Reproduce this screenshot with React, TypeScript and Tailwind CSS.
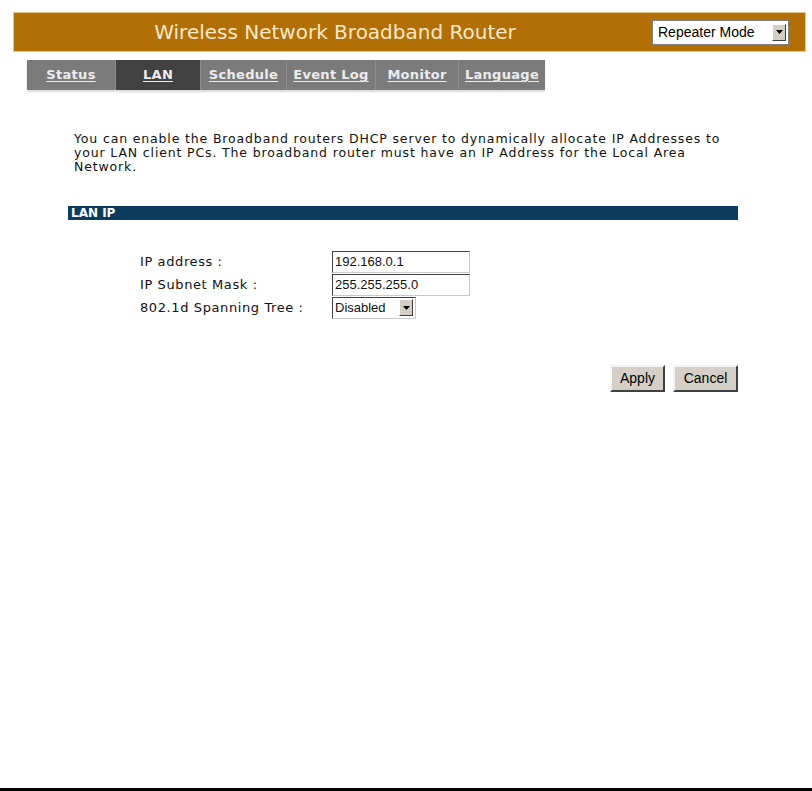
import React from "react";

const Arrow = () => (
  <span className="flex h-[17px] w-[14px] items-center justify-center border border-t-white border-l-white border-b-[#404040] border-r-[#404040] bg-[#d4d0c8]">
    <svg width="7" height="4" viewBox="0 0 7 4"><path d="M0 0h7L3.5 4z" fill="#000" /></svg>
  </span>
);

const tabs = [
  { label: "Status", w: 88, active: false },
  { label: "LAN", w: 85, active: true },
  { label: "Schedule", w: 86, active: false },
  { label: "Event Log", w: 89, active: false },
  { label: "Monitor", w: 83, active: false },
  { label: "Language", w: 87, active: false },
];

const arial = { fontFamily: '"Liberation Sans", Arial, sans-serif' };
const inputCls =
  "flex h-[22px] w-[138px] items-center border border-t-[#404040] border-l-[#404040] border-b-[#c8c8c8] border-r-[#c8c8c8] bg-white pl-[2px] text-[13px] tracking-normal";

export default function App() {
  return (
    <div className="relative flex h-[791px] w-[812px] flex-col overflow-hidden bg-white" style={{ fontFamily: '"DejaVu Sans", Verdana, sans-serif' }}>
      {/* header */}
      <div className="ml-[13px] mt-[12px] flex h-[40px] w-[793px] items-center border border-[#e8c888] bg-[#b26f05]">
        <div className="flex-1 pl-[4px] text-center text-[20px] text-[#f6e8c8]">Wireless Network Broadband Router</div>
        <div className="mr-[16px] flex h-[25px] w-[137px] items-center border border-[#808080] bg-white pl-[5px] pr-[2px]">
          <span className="flex-1 text-[14px] text-black" style={arial}>Repeater Mode</span>
          <Arrow />
        </div>
      </div>

      {/* tabs */}
      <div className="ml-[27px] mt-[8px] flex h-[30px] self-start shadow-[0_2px_2px_rgba(0,0,0,0.15)]">
        {tabs.map((t, i) => (
          <div
            key={t.label}
            className={`flex h-full items-center justify-center ${t.active ? "bg-[#424242]" : "bg-[#7b7b7b]"} ${i > 0 ? "border-l border-[#8e8e8e]" : ""}`}
            style={{ width: t.w }}
          >
            <span className="text-[13px] font-bold tracking-[0.3px] text-[#ececec] underline underline-offset-2">{t.label}</span>
          </div>
        ))}
      </div>

      {/* description */}
      <p className="ml-[74px] mt-[42px] whitespace-nowrap text-[12.5px] leading-[14px] tracking-[0.85px] text-[#111]">
        You can enable the Broadband routers DHCP server to dynamically allocate IP Addresses to
        <br />
        your LAN client PCs. The broadband router must have an IP Address for the Local Area
        <br />
        Network.
      </p>

      {/* section header */}
      <div className="ml-[68px] mt-[32px] flex h-[14px] w-[670px] items-center bg-[#0d3b5e] pl-[3px]">
        <span className="text-[12px] font-bold text-white">LAN IP</span>
      </div>

      {/* form */}
      <div className="ml-[140px] mt-[30px] flex flex-col text-[13px] tracking-[0.6px] text-[#111]">
        <div className="flex h-[23px] items-center">
          <span className="w-[192px]">IP address :</span>
          <div className={inputCls} style={arial}>192.168.0.1</div>
        </div>
        <div className="flex h-[23px] items-center">
          <span className="w-[192px]">IP Subnet Mask :</span>
          <div className={inputCls} style={arial}>255.255.255.0</div>
        </div>
        <div className="flex h-[23px] items-center">
          <span className="w-[192px]">802.1d Spanning Tree :</span>
          <div className="flex h-[22px] w-[84px] items-center border border-t-[#404040] border-l-[#404040] border-b-[#c8c8c8] border-r-[#c8c8c8] bg-white pl-[2px] pr-[2px] tracking-normal">
            <span className="flex-1 text-[13px]" style={arial}>Disabled</span>
            <Arrow />
          </div>
        </div>
      </div>

      {/* buttons */}
      <div className="mr-[74px] mt-[46px] flex justify-end gap-[8px]" style={arial}>
        <button className="h-[27px] w-[55px] border-2 border-t-[#f4f4f4] border-l-[#f4f4f4] border-b-[#404040] border-r-[#404040] bg-[#d4d0c8] text-[14px] text-black">Apply</button>
        <button className="h-[27px] w-[65px] border-2 border-t-[#f4f4f4] border-l-[#f4f4f4] border-b-[#404040] border-r-[#404040] bg-[#d4d0c8] text-[14px] text-black">Cancel</button>
      </div>

      <div className="flex-1" />
      <div className="h-[3px] w-full bg-black" />
    </div>
  );
}
